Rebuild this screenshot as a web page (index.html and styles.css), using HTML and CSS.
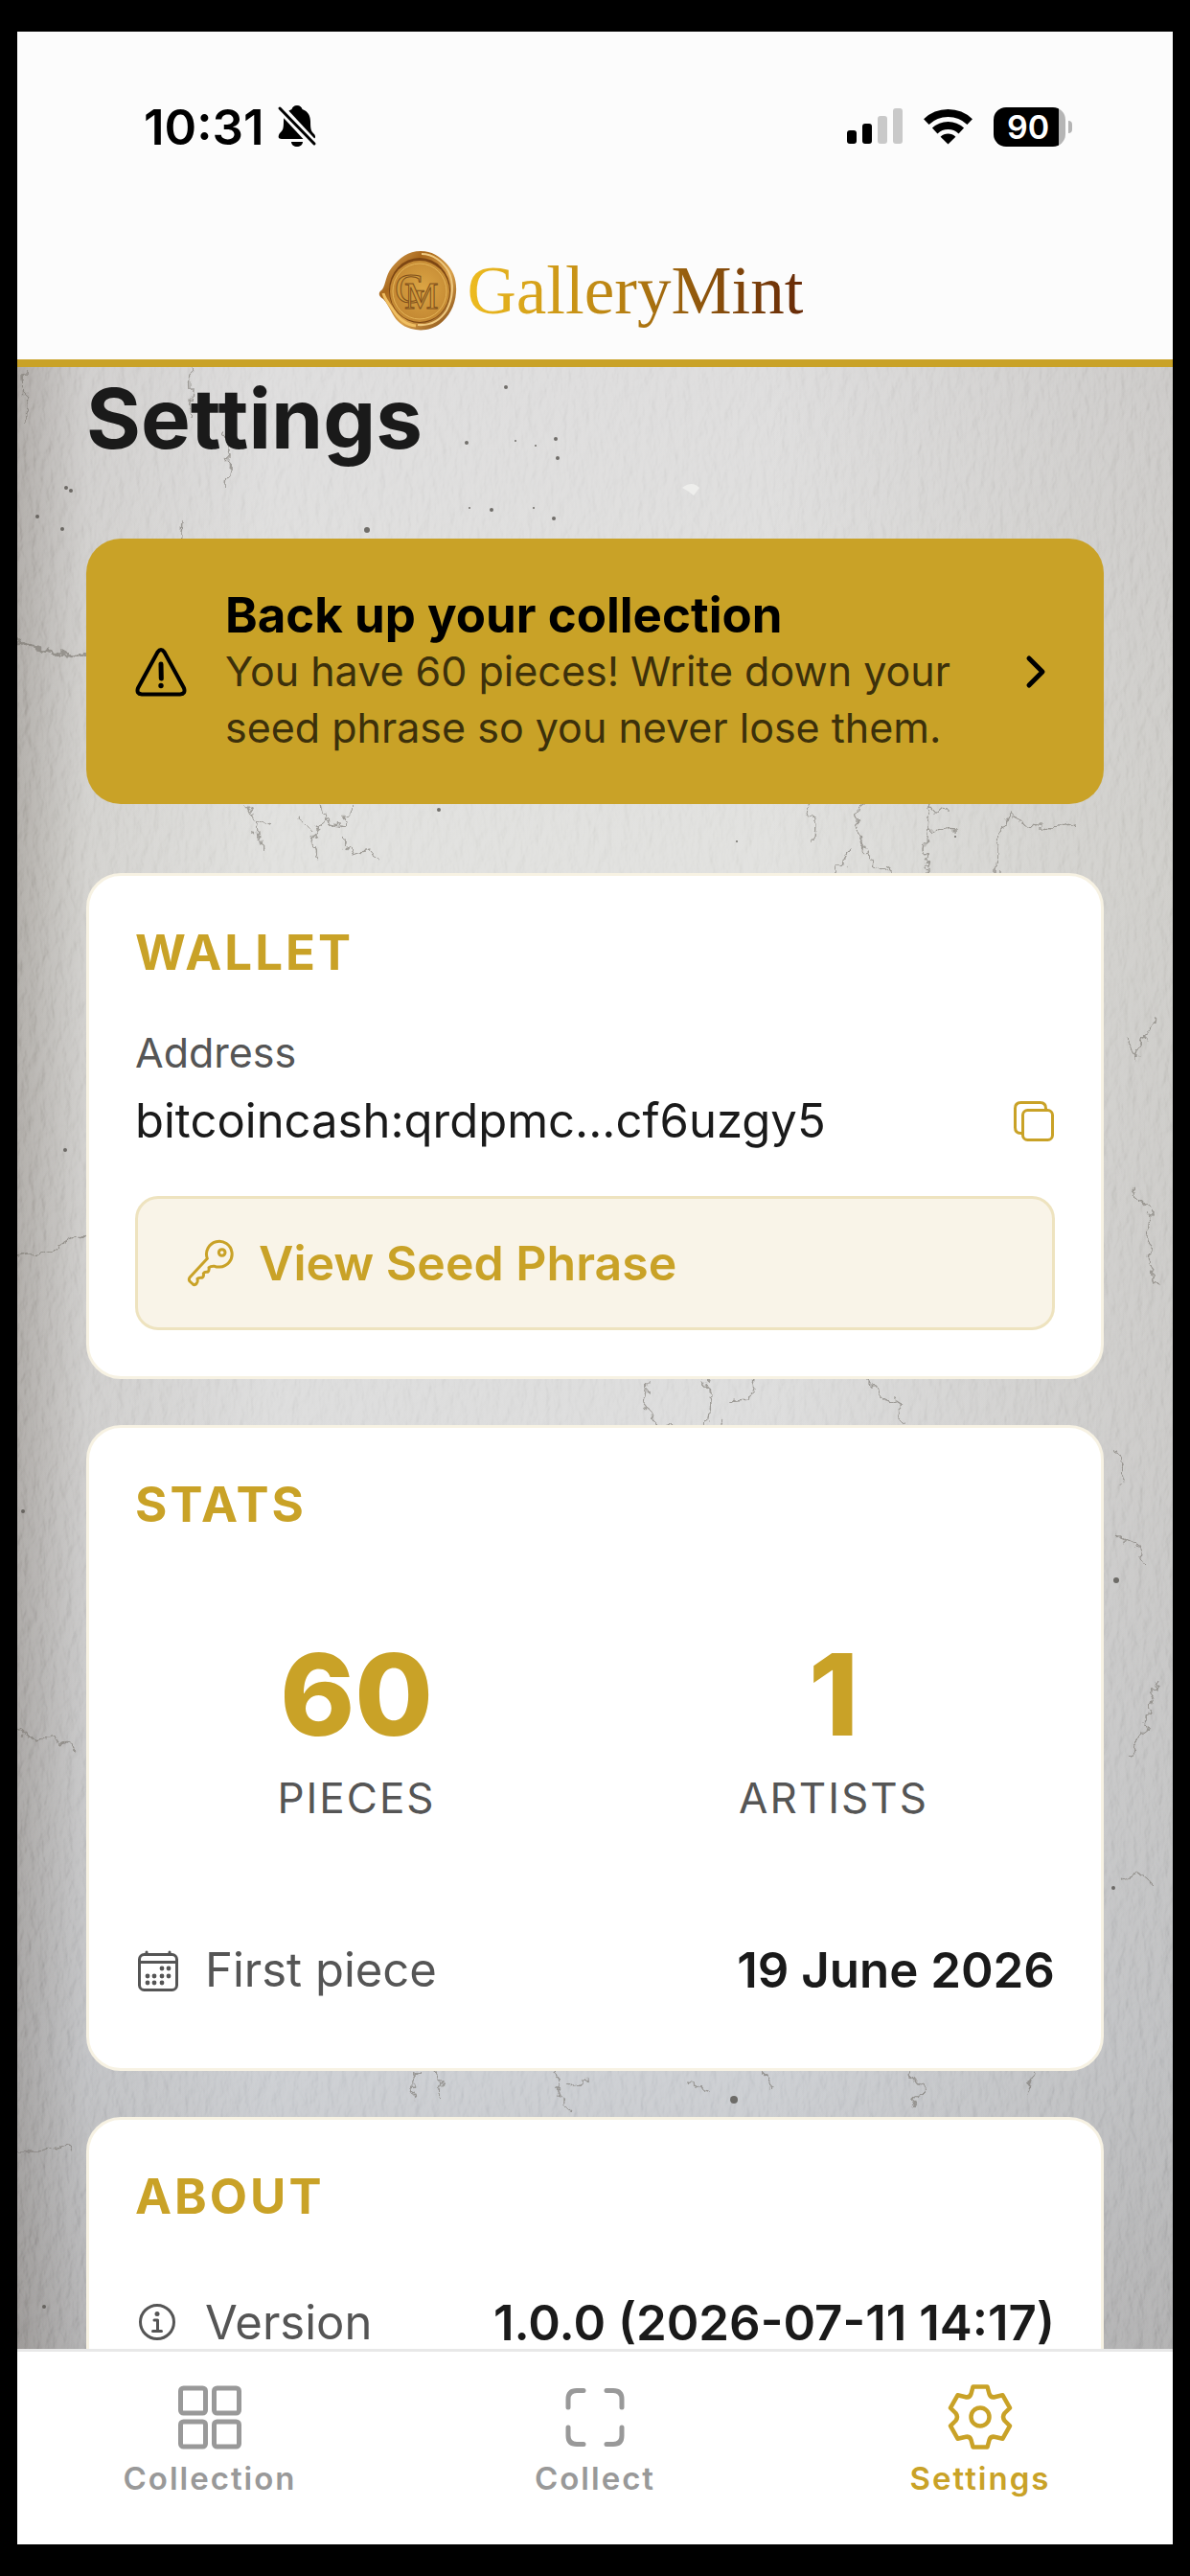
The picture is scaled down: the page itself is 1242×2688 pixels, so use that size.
FILE: index.html
```html
<!DOCTYPE html>
<html lang="en">
<head>
    <meta charset="UTF-8">
    <meta name="viewport" content="width=device-width, initial-scale=1.0">
    <title>GalleryMint - Settings</title>
    <link rel="stylesheet" href="styles.css">
</head>
<body>
    <div class="app">
        <header class="header">
            <div class="status">
                <div class="status-group">
                    <span class="time">10:31</span>
                    <svg class="bell" width="42" height="46" viewBox="0 0 42 46">
                        <path d="M21 1c3 0 5 2 5.500 4 6 2 8.500 7 8.500 13 0 9 1 10 4 13 2 3 1 5-2 5H5c-4 0-4-3-2-6 3-3 4-4 4-12 0-6 3-11 8.500-13C16 3 18 1 21 1zM15 39h12c0 3-3 5-6 5s-6-2-6-5z" fill="#000"/>
                        <path d="M1 1l40 43" stroke="#fcfcfc" stroke-width="9"/>
                        <path d="M3 4l36 37" stroke="#000" stroke-width="3" stroke-linecap="round"/>
                    </svg>
                </div>
                <div class="status-group status-right">
                    <svg width="58" height="38" viewBox="0 0 58 38">
                        <rect x="0" y="23" width="10" height="14" rx="3"/>
                        <rect x="16" y="16" width="10" height="21" rx="3"/>
                        <rect x="32" y="8" width="10" height="29" rx="3" fill="#c9c9c9"/>
                        <rect x="48" y="0" width="10" height="37" rx="3" fill="#c9c9c9"/>
                    </svg>
                    <svg width="51" height="38" viewBox="0 0 51 38">
                        <path d="M2.800 14.100A33 33 0 0 1 48.200 14.100M11.700 23.500A20 20 0 0 1 39.300 23.500" fill="none" stroke="#000" stroke-width="8"/>
                        <path d="M25.500 37.500L17.600 29.700A11.500 11.500 0 0 1 33.400 29.700z"/>
                    </svg>
                    <div class="battery"><span class="battery-level">90</span></div>
                </div>
            </div>
            <div class="logo">
                <svg width="84" height="84" viewBox="0 0 84 84">
                    <defs>
                        <linearGradient id="rim" x1="0" y1="0" x2="1" y2="1">
                            <stop offset="0" stop-color="#e2b062"/>
                            <stop offset="0.300" stop-color="#a9681c"/>
                            <stop offset="0.600" stop-color="#d9a04a"/>
                            <stop offset="1" stop-color="#7a430f"/>
                        </linearGradient>
                        <radialGradient id="wax" cx="0.550" cy="0.450">
                            <stop offset="0" stop-color="#dba544"/>
                            <stop offset="1" stop-color="#c58a34"/>
                        </radialGradient>
                    </defs>
                    <path d="M45 1C57 1 64 6 71 13 79 21 83 31 82 44 81 59 74 70 65 77 57 83 46 85 35 82 25 79 20 74 16 67 12 60 10 55 6 51 0 47 1 44 5 41 9 35 8 27 15 18 23 8 32 1 45 1z" fill="url(#rim)"/>
                    <path d="M46 4C58 4 68 12 74 22 80 34 79 50 72 63 65 74 55 79 42 78" fill="none" stroke="#efc980" stroke-width="2"/>
                    <path d="M40 79C28 78 21 70 16 62 10 54 7 49 6 45" fill="none" stroke="#f0bf62" stroke-width="3"/>
                    <ellipse cx="44" cy="42" rx="32" ry="34" fill="#7d4613"/>
                    <ellipse cx="44" cy="43" rx="31" ry="32" fill="url(#wax)"/>
                    <ellipse cx="44" cy="43" rx="28" ry="29" fill="none" stroke="#e4b458"/>
                    <g class="seal-text">
                        <text x="18" y="55">G</text>
                        <text x="28" y="61">M</text>
                    </g>
                </svg>
                <span class="logo-name">GalleryMint</span>
            </div>
        </header>

        <main class="content">
            <svg class="wall" viewBox="0 0 1206 2068" preserveAspectRatio="xMidYMid slice" aria-hidden="true">
                <defs>
                    <filter id="plaster" x="0" y="0" width="100%" height="100%">
                        <feTurbulence type="fractalNoise" baseFrequency="0.110 0.050" numOctaves="4" seed="8"/>
                        <feDiffuseLighting surfaceScale="3" lighting-color="#ffffff">
                            <feDistantLight azimuth="20" elevation="60"/>
                        </feDiffuseLighting>
                    </filter>
                    <!-- roughens the crack lines -->
                    <filter id="rough" x="0" y="0" width="100%" height="100%">
                        <feTurbulence type="fractalNoise" baseFrequency="0.080" numOctaves="3" seed="3"/>
                        <feDisplacementMap in="SourceGraphic" scale="16" xChannelSelector="R" yChannelSelector="G"/>
                    </filter>
                </defs>
                <rect class="grain" width="1206" height="2068" filter="url(#plaster)"/>
                <g fill="none" stroke="#77736c" stroke-width="1.500" opacity="0.600" filter="url(#rough)">
                    <path d="M0 0h1M1205 2067h1" stroke="none"/>
                    <path d="M0 284l10 7 14 3 12 5 16 1 12 2 9-4" stroke-width="3"/>
                    <path d="M8 0l1 60M181 0l1 22-2 30M172 160l-2 30-8 12M217 70l5 24-3 30"/>
                    <path d="M240 456l8 18 18 5M248 474l6 30M318 456l4 18-14 20 6 20M322 474l20 3 10-21M340 494l10 14 18-4 10 12M290 470l18 15"/>
                    <path d="M822 456l9 16-1 26M880 456l-4 18 6 22 14 24 14 8M870 500l-14 28v14M953 456l-2 26-4 20 4 16-6 24M951 482l30 2M950 462l22 2M1024 486l14-22 14 14 28 2 24-4M1024 486l-3 60M905 520l24 20"/>
                    <path d="M660 1056l-4 30 12 20M715 1056l10 16-4 34M740 1080l24-2 4-18M724 1120l12-24M884 1056l20 20 18 6M920 1082l2 24M666 1108q20-8 30-2l12 10"/>
                    <path d="M0 928l24-4 12-2 24-16 14-4M1156 700l12 20 10-30 10-8M1164 860l20 24-4 50 10 26M1150 1220l18 8 10 20M1190 1370l-16 60-14 22M1152 1580l22-8 10 12"/>
                    <path d="M0 1420l18 14 22-4 20 12M1146 1126l12 20-6 20"/>
                    <path d="M420 1778l-10 16 4 14M432 1778l12 12-6 16M560 1778l10 14-8 14 14 12M576 1792l20-3M700 1790l22 8M780 1778l8 20M930 1778l16 20-10 16M1060 1780l-8 26"/>
                    <path d="M0 1862l22 0 16-6 18 4"/>
                </g>
                <g fill="#55524d" opacity="0.800">
                    <circle cx="51" cy="126" r="2"/><circle cx="56" cy="129" r="2"/>
                    <circle cx="21" cy="156" r="2"/><circle cx="47" cy="169" r="2"/>
                    <circle cx="365" cy="170" r="3"/><circle cx="469" cy="79" r="2"/>
                    <circle cx="510" cy="21" r="2"/><circle cx="562" cy="75" r="2"/>
                    <circle cx="541" cy="82" r="1"/><circle cx="520" cy="77" r="1"/>
                    <circle cx="564" cy="95" r="2"/><circle cx="472" cy="147" r="1"/>
                    <circle cx="495" cy="149" r="2"/><circle cx="539" cy="147" r="1"/>
                    <circle cx="560" cy="158" r="2"/><circle cx="440" cy="462" r="2"/>
                    <circle cx="751" cy="495" r="1"/><circle cx="979" cy="490" r="1"/>
                    <circle cx="6" cy="1194" r="2"/><circle cx="50" cy="817" r="2"/>
                    <circle cx="1147" cy="1266" r="3"/><circle cx="1144" cy="1587" r="2"/>
                    <circle cx="748" cy="1808" r="4"/><circle cx="28" cy="2024" r="2"/>
                </g>
                <path d="M694 126q10-8 18 0l-6 8q-6-5-12-8z" fill="#eeeeec"/>
            </svg>

            <h1 class="title">Settings</h1>

            <button class="banner">
                <svg width="54" height="54" viewBox="0 0 54 54" fill="none" stroke="#000" stroke-width="4" stroke-linecap="round" stroke-linejoin="round">
                    <path d="M23.500 6.500q3.500-5 7 0L51 44q2 6-4 6.500H7Q1 50 3 44z"/>
                    <path d="M27 19l.300 15" stroke-width="5"/>
                    <circle cx="27" cy="41.500" r="2.700" fill="#000" stroke="none"/>
                </svg>
                <span class="banner-text">
                    <strong class="banner-title">Back up your collection</strong>
                    <span class="banner-desc">You have 60 pieces! Write down your seed phrase so you never lose them.</span>
                </span>
                <svg width="48" height="48" viewBox="0 0 48 48" fill="none" stroke="#000" stroke-width="5" stroke-linecap="round" stroke-linejoin="round">
                    <path d="M18 10l14 14-14 14"/>
                </svg>
            </button>

            <section class="card">
                <h2 class="card-title">Wallet</h2>
                <div class="label">Address</div>
                <div class="address">
                    <span>bitcoincash:qrdpmc...cf6uzgy5</span>
                    <button class="copy" aria-label="Copy address">
                        <svg width="44" height="44" viewBox="0 0 44 44" fill="none" stroke="#c9a227" stroke-width="3" stroke-linejoin="round">
                            <rect x="10.500" y="10.500" width="31" height="31" rx="5"/>
                            <path d="M10 34.500H8.500q-6 0-6-6v-20q0-6 6-6h20q6 0 6 6V10"/>
                        </svg>
                    </button>
                </div>
                <button class="seed">
                    <svg width="50" height="50" viewBox="0 0 150 150" fill="none" stroke="#c9a227" stroke-width="9" stroke-linejoin="round">
                        <path d="M67 61L12 120Q8 126 12 132L22 141Q28 146 34 138Q38 134 36 124Q40 120 50 121Q57 118 55 107Q58 102 68 103Q74 100 72 89Q78 84 90 85Q98 88 106 87A40 40 0 1 0 67 61z"/>
                        <circle cx="113" cy="42" r="10"/>
                    </svg>
                    View Seed Phrase
                </button>
            </section>

            <section class="card">
                <h2 class="card-title">Stats</h2>
                <div class="stats">
                    <div class="stat">
                        <div class="stat-value">60</div>
                        <div class="stat-label">Pieces</div>
                    </div>
                    <div class="stat">
                        <div class="stat-value">1</div>
                        <div class="stat-label">Artists</div>
                    </div>
                </div>
                <div class="row">
                    <svg width="48" height="48" viewBox="0 0 48 48" fill="none" stroke="#555" stroke-width="3" stroke-linecap="round">
                        <rect x="4.500" y="7.500" width="39" height="37" rx="5"/>
                        <path d="M4.500 15.500h39M12 5v2M36 5v2"/>
                        <g fill="#555" stroke="none">
                            <circle cx="28" cy="22" r="2.400"/><circle cx="35" cy="22" r="2.400"/>
                            <circle cx="13" cy="30" r="2.400"/><circle cx="20" cy="30" r="2.400"/><circle cx="28" cy="30" r="2.400"/><circle cx="35" cy="30" r="2.400"/>
                            <circle cx="13" cy="37" r="2.400"/><circle cx="20" cy="37" r="2.400"/><circle cx="28" cy="37" r="2.400"/>
                        </g>
                    </svg>
                    <span class="row-label">First piece</span>
                    <span class="row-value">19 June 2026</span>
                </div>
            </section>

            <section class="card">
                <h2 class="card-title">About</h2>
                <div class="row">
                    <svg width="48" height="48" viewBox="0 0 48 48" fill="none" stroke="#555" stroke-width="3" stroke-linecap="round" stroke-linejoin="round">
                        <circle cx="23" cy="23" r="17.500"/>
                        <path d="M20 21h3.500v11M18.500 32.500h9"/>
                        <circle cx="23" cy="14.500" r="2.500" fill="#555" stroke="none"/>
                    </svg>
                    <span class="row-label">Version</span>
                    <span class="row-value">1.0.0 (2026-07-11 14:17)</span>
                </div>
            </section>
        </main>

        <nav class="tabs">
            <a class="tab" href="#collection">
                <svg width="72" height="72" viewBox="0 0 72 72" fill="none" stroke="currentColor" stroke-width="5">
                    <rect x="5.500" y="6" width="26" height="26" rx="3"/>
                    <rect x="40.500" y="6" width="26" height="26" rx="3"/>
                    <rect x="5.500" y="41" width="26" height="26" rx="3"/>
                    <rect x="40.500" y="41" width="26" height="26" rx="3"/>
                </svg>
                Collection
            </a>
            <a class="tab" href="#collect">
                <svg width="72" height="72" viewBox="0 0 72 72" fill="none" stroke="currentColor" stroke-width="5" stroke-linecap="round">
                    <path d="M24 8.500h-7q-9 0-9 9V26M48 8.500h7q9 0 9 9V26M24 64.500h-7q-9 0-9-9V47M48 64.500h7q9 0 9-9V47"/>
                </svg>
                Collect
            </a>
            <a class="tab active" href="#settings">
                <svg width="72" height="72" viewBox="-36 -36 72 72" fill="none" stroke="currentColor" stroke-width="4.500" stroke-linejoin="round">
                    <path d="M-9.500-24L-7.500-31.500H7.500L9.500-24Q11-19.500 16-21L23.500-22.700 31-9.300 25.600-4Q22.500 0 25.600 4L31 9.300 23.500 22.700 16 21Q11 19.500 9.500 24L7.500 31.500H-7.500L-9.500 24Q-11 19.500-16 21L-23.500 22.700-31 9.300-25.600 4Q-22.500 0-25.600-4L-31-9.300-23.500-22.700-16-21Q-11-19.500-9.500-24z"/>
                    <circle r="9.500"/>
                </svg>
                Settings
            </a>
        </nav>
    </div>
</body>
</html>
```
FILE: styles.css
```css
* {
    box-sizing: border-box;
}

body {
    margin: 0;
    background-color: #000;
    color: #1a1a1a;
    font-family: Inter, "Liberation Sans", sans-serif;
}

button {
    border: none;
    background: none;
    padding: 0;
    font-family: inherit;
    text-align: left;
    cursor: pointer;
}

svg {
    display: block;
    flex-shrink: 0;
}

.app {
    display: flex;
    flex-direction: column;
    height: 100vh;
    border: solid #000;
    border-width: 33px 18px;
}

.header {
    background-color: #fcfcfc;
    border-bottom: 8px solid #c9a227;
    padding: 69px 0 30px;
}

.status {
    display: flex;
    justify-content: space-between;
    padding: 0 106px 0 132px;
    color: #000;
}

.status-group {
    display: flex;
    align-items: center;
    gap: 14px;
    height: 60px;
}

.status-right {
    gap: 22px;
}

.time {
    font-size: 51px;
    font-weight: 600;
}

.battery {
    position: relative;
    width: 75px;
    margin-right: 6px;
    border-radius: 13px;
    background: linear-gradient(to right, #000 68px, #b5b5b5 68px);
}

.battery::after {
    content: "";
    position: absolute;
    top: 14px;
    right: -7px;
    width: 4px;
    height: 13px;
    border-radius: 0 4px 4px 0;
    background-color: #b5b5b5;
}

.battery-level {
    display: block;
    padding-right: 3px;
    color: #fff;
    font-size: 34px;
    font-weight: 600;
    line-height: 41px;
    text-align: center;
}

.logo {
    display: flex;
    justify-content: center;
    align-items: center;
    gap: 10px;
    margin-top: 99px;
    padding-right: 10px;
}

.seal-text {
    fill: #d29a3c;
    stroke: #80501b;
    font-family: "Liberation Serif", serif;
    font-size: 44px;
}

.seal-text text:last-child {
    font-size: 40px;
}

.logo-name {
    background: linear-gradient(to right, #eebc20, #b98212 45%, #8b520c 72%, #672a08);
    -webkit-background-clip: text;
    background-clip: text;
    color: transparent;
    font-family: "Liberation Serif", serif;
    font-size: 71px;
    line-height: 84px;
}

.content {
    position: relative;
    z-index: 0;
    flex: 1;
    min-height: 0;
    overflow: hidden;
    padding: 4px 72px 0;
    background-color: #cdccca;
}

/* plaster wall behind the cards */
.wall {
    position: absolute;
    inset: 0;
    z-index: -1;
    width: 100%;
    height: 100%;
    background-image:
        linear-gradient(to right, rgba(70, 60, 50, 0.4), rgba(90, 80, 70, 0.14) 6%, transparent 22%, transparent 65%, rgba(90, 82, 70, 0.18)),
        linear-gradient(#d4d3d3, #d8d8d5 25%, #d2d2d2 55%, #c0c3c8 85%, #acadb0);
}

.grain {
    opacity: 0.55;
    mix-blend-mode: soft-light;
}

.title {
    margin: 0 0 75px;
    font-size: 87px;
    font-weight: 700;
    line-height: 100px;
}

.banner {
    display: flex;
    align-items: center;
    width: 100%;
    margin-bottom: 72px;
    padding: 50px 48px 50px 51px;
    border-radius: 36px;
    background-color: #c9a227;
    color: #000;
    line-height: 59px;
}

.banner-text {
    flex: 1;
    margin: 0 40px;
}

.banner-title {
    display: block;
    font-size: 51px;
}

.banner-desc {
    display: block;
    color: #3c300b;
    font-size: 43px;
}

.card {
    margin-bottom: 48px;
    padding: 48px;
    border: 3px solid #f7f2e3;
    border-radius: 36px;
    background-color: #fff;
    font-size: 49px;
    line-height: 64px;
}

.card:has(.row) {
    padding-bottom: 0;
}

.card-title {
    margin: 0 0 44px;
    color: #c9a227;
    font-size: 51px;
    font-weight: 700;
    letter-spacing: 3px;
    text-transform: uppercase;
}

.label {
    margin-bottom: 12px;
    color: #555;
    font-size: 43px;
    line-height: 56px;
}

.address {
    display: flex;
    justify-content: space-between;
    align-items: center;
    margin-bottom: 46px;
}

.seed {
    display: flex;
    align-items: center;
    gap: 26px;
    width: 100%;
    height: 140px;
    padding: 0 50px;
    border: 3px solid #eee3bf;
    border-radius: 24px;
    background-color: #f9f4e8;
    color: #c9a227;
    font-size: 50px;
    font-weight: 600;
}

.stats {
    display: grid;
    grid-template-columns: 1fr 1fr;
    gap: 36px;
    padding: 62px 0 96px;
    text-align: center;
}

.stat-value {
    margin-bottom: 20px;
    color: #c9a227;
    font-size: 118px;
    font-weight: 800;
    line-height: 120px;
}

.stat-label {
    color: #555;
    font-size: 44px;
    line-height: 56px;
    letter-spacing: 2px;
    text-transform: uppercase;
}

.row {
    display: flex;
    align-items: center;
    padding: 24px 0 70px;
}

.row-label {
    margin-left: 25px;
    color: #555;
}

.row-value {
    margin-left: auto;
    font-size: 51px;
    font-weight: 600;
}

.tabs {
    display: grid;
    grid-template-columns: repeat(3, 1fr);
    border-top: 3px solid #e8e8e8;
    background-color: #fff;
}

.tab {
    display: flex;
    flex-direction: column;
    align-items: center;
    gap: 8px;
    padding: 32px 0 49px;
    color: #999;
    font-size: 33px;
    font-weight: 600;
    line-height: 40px;
    letter-spacing: 2px;
    text-decoration: none;
}

.tab.active {
    color: #c9a227;
}
```
